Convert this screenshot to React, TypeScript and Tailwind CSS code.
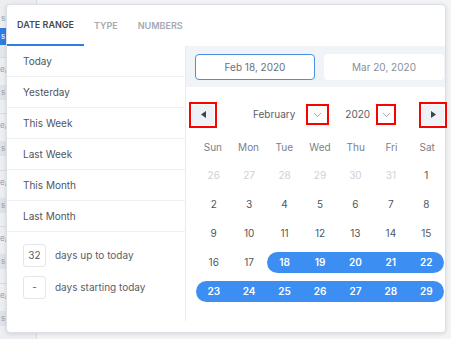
const presets = ["Today", "Yesterday", "This Week", "Last Week", "This Month", "Last Month"];
const weekdays = ["Sun", "Mon", "Tue", "Wed", "Thu", "Fri", "Sat"];

type Day = { n: number; muted?: boolean; sel?: boolean };

const weeks: Day[][] = [
  [26, 27, 28, 29, 30, 31].map((n) => ({ n, muted: true })).concat([{ n: 1 }]),
  [2, 3, 4, 5, 6, 7, 8].map((n) => ({ n })),
  [9, 10, 11, 12, 13, 14, 15].map((n) => ({ n })),
  [16, 17].map((n) => ({ n })).concat([18, 19, 20, 21, 22].map((n) => ({ n, sel: true }))),
  [23, 24, 25, 26, 27, 28, 29].map((n) => ({ n, sel: true })),
];

function Chevron() {
  return (
    <svg width="9" height="6" viewBox="0 0 9 6" fill="none">
      <path d="M1 1l3.5 3.5L8 1" stroke="#a3a8b1" strokeWidth="1" />
    </svg>
  );
}

function ArrowBtn({ dir }: { dir: "left" | "right" }) {
  return (
    <div className="border-2 border-[#ff0000] p-px">
      <div className="w-[22px] h-[20px] bg-[#eef1f5] rounded-[3px] flex items-center justify-center">
        <svg width="5" height="7" viewBox="0 0 5 7">
          {dir === "left" ? <path d="M5 0v7L0 3.5z" fill="#3d4450" /> : <path d="M0 0v7l5-3.5z" fill="#3d4450" />}
        </svg>
      </div>
    </div>
  );
}

function BackdropTable() {
  const rows = [0, 1, 2, 3, 4];
  return (
    <div className="w-[37px] h-full border-r border-[#d9dce1] bg-[#eceef2] flex flex-col text-[8px] text-[#9aa0a8]">
      <div className="h-[28px] pt-[12px] pl-[1px]">ss</div>
      <div className="h-[17px] bg-[#2f7de1] text-white pl-[1px] leading-[17px]">s</div>
      <div className="h-[13px] bg-[#e4e7ec]" />
      {rows.map((r) => (
        <div key={r} className="h-[58px] border-t border-[#d8dbe0] flex flex-col pt-[5px] gap-[10px]">
          <div>e/</div>
          <div className="h-[15px] bg-[#dfe2e6] w-full pl-[1px] leading-[15px]">s</div>
        </div>
      ))}
    </div>
  );
}

export default function App() {
  return (
    <div className="relative w-[451px] h-[339px] bg-[#f3f4f6] overflow-hidden font-['Inter',sans-serif]">
      <BackdropTable />

      <div className="absolute left-[6px] top-[4px] w-[440px] h-[329px] bg-white rounded-[4px] border border-[#dcdfe4] shadow-[0_1px_4px_rgba(0,0,0,0.12)] flex flex-col">
        {/* tabs */}
        <div className="flex h-[41px] shrink-0">
          <div className="px-[10px] flex items-center text-[9px] font-semibold text-[#454b55] border-b-2 border-[#2f7de1]">DATE RANGE</div>
          <div className="px-[10px] flex items-center text-[9px] font-semibold text-[#a4a9b1]">TYPE</div>
          <div className="px-[10px] flex items-center text-[9px] font-semibold text-[#a4a9b1]">NUMBERS</div>
        </div>

        <div className="flex h-[275px]">
          {/* presets */}
          <div className="w-[180px] border-r border-[#e8ebef] flex flex-col">
            {presets.map((p) => (
              <div key={p} className="h-[31px] border-b border-[#eef0f3] pl-[16px] flex items-center text-[10px] text-[#50555e]">
                {p}
              </div>
            ))}
            <div className="pt-[12px] pl-[16px] flex flex-col gap-[9px]">
              <div className="flex items-center gap-[9px]">
                <div className="w-[23px] h-[23px] border border-[#e3e6ea] rounded-[3px] flex items-center justify-center text-[10px] text-[#5a606a]">32</div>
                <span className="text-[10px] text-[#5a606a]">days up to today</span>
              </div>
              <div className="flex items-center gap-[9px]">
                <div className="w-[23px] h-[23px] border border-[#e3e6ea] rounded-[3px] flex items-center justify-center text-[10px] text-[#5a606a]">-</div>
                <span className="text-[10px] text-[#5a606a]">days starting today</span>
              </div>
            </div>
          </div>

          {/* calendar */}
          <div className="flex-1 flex flex-col">
            <div className="h-[41px] bg-[#f0f3f7] pt-[8px] pl-[9px] flex gap-[9px]">
              <div className="w-[120px] h-[26px] bg-white border border-[#4a90e2] rounded-[4px] flex items-center justify-center text-[10px] text-[#6b7079]">
                Feb 18, 2020
              </div>
              <div className="w-[120px] h-[26px] bg-white rounded-[4px] flex items-center justify-center text-[10px] text-[#8a8f97]">
                Mar 20, 2020
              </div>
            </div>

            <div className="mt-[14px] h-[27px] flex items-center pl-[3px]">
              <ArrowBtn dir="left" />
              <span className="ml-[36px] text-[10px] text-[#5a606a]">February</span>
              <div className="ml-[11px] w-[23px] h-[21px] border-2 border-[#ff0000] flex items-center justify-center">
                <Chevron />
              </div>
              <span className="ml-[16px] text-[10px] text-[#5a606a]">2020</span>
              <div className="ml-[6px] w-[20px] h-[21px] border-2 border-[#ff0000] flex items-center justify-center">
                <Chevron />
              </div>
              <div className="ml-auto -mr-[2px]">
                <ArrowBtn dir="right" />
              </div>
            </div>

            <div className="mt-[10px] ml-[9px] w-[250px] flex flex-col gap-[8px]">
              <div className="grid grid-cols-7 h-[19px] items-center text-[10px] text-[#7a7f88]">
                {weekdays.map((w) => (
                  <div key={w} className="text-center">{w}</div>
                ))}
              </div>
              {weeks.map((wk, i) => (
                <div key={i} className="grid grid-cols-7 h-[21px] px-[1px]">
                  {wk.map((d, j) => {
                    const prevSel = j > 0 && wk[j - 1].sel;
                    const nextSel = j < 6 && wk[j + 1].sel;
                    let cls = "flex items-center justify-center text-[10px] ";
                    if (d.sel) {
                      cls += "bg-[#3d8ef3] text-white font-semibold ";
                      if (!prevSel) cls += "rounded-l-full ";
                      if (!nextSel) cls += "rounded-r-full ";
                    } else if (d.muted) {
                      cls += "text-[#cdd1d6] ";
                    } else {
                      cls += "text-[#50555e] ";
                    }
                    return (
                      <div key={j} className={cls}>
                        {d.n}
                      </div>
                    );
                  })}
                </div>
              ))}
            </div>
          </div>
        </div>
      </div>
    </div>
  );
}
